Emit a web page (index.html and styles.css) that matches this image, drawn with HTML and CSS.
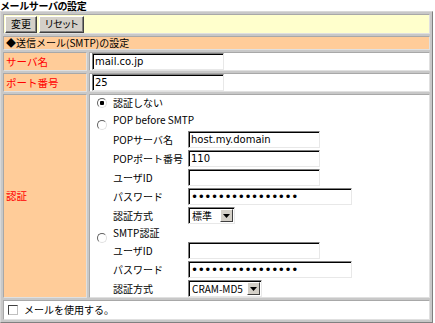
FILE: index.html
```html
<!DOCTYPE html>
<html lang="ja">

<head>
    <meta charset="UTF-8">
    <title>メールサーバの設定</title>
    <link rel="stylesheet" href="styles.css">
</head>

<body>
    <h1 class="page-title">メールサーバの設定</h1>
    <form id="mail-form">
        <table class="settings">
            <tr class="toolbar">
                <td colspan="2">
                    <button type="submit" class="btn">変更</button><button type="reset" class="btn">リセット</button>
                </td>
            </tr>
            <tr class="section">
                <td colspan="2">◆送信メール(SMTP)の設定</td>
            </tr>
            <tr>
                <th>サーバ名</th>
                <td><input type="text" class="field" value="mail.co.jp"></td>
            </tr>
            <tr>
                <th>ポート番号</th>
                <td><input type="text" class="field" value="25"></td>
            </tr>
            <tr>
                <th class="auth-label">認証</th>
                <td class="auth-cell">
                    <label class="option first">
                        <input type="radio" name="auth" class="radio" checked>
                        <span>認証しない</span>
                    </label>

                    <label class="option drop">
                        <input type="radio" name="auth" class="radio">
                        <span>POP before SMTP</span>
                    </label>
                    <div class="sub-fields pop">
                        <span class="sub-label">POPサーバ名</span>
                        <input type="text" class="field" value="host.my.domain">
                        <span class="sub-label">POPポート番号</span>
                        <input type="text" class="field" value="110">
                        <span class="sub-label">ユーザID</span>
                        <input type="text" class="field" value="">
                        <span class="sub-label">パスワード</span>
                        <input type="password" class="field wide" value="1234567890123456">
                        <span class="sub-label">認証方式</span>
                        <div class="select-box">
                            <select class="select short">
                                <option>標準</option>
                                <option>APOP</option>
                            </select><span class="select-arrow"><svg width="7" height="4" viewBox="0 0 7 4"><path d="M0 0h7L3.5 4z" fill="#000"/></svg></span>
                        </div>
                    </div>

                    <label class="option drop">
                        <input type="radio" name="auth" class="radio">
                        <span>SMTP認証</span>
                    </label>
                    <div class="sub-fields">
                        <span class="sub-label">ユーザID</span>
                        <input type="text" class="field" value="">
                        <span class="sub-label">パスワード</span>
                        <input type="password" class="field wide" value="1234567890123456">
                        <span class="sub-label">認証方式</span>
                        <div class="select-box">
                            <select class="select long">
                                <option>CRAM-MD5</option>
                                <option>LOGIN</option>
                                <option>PLAIN</option>
                            </select><span class="select-arrow"><svg width="7" height="4" viewBox="0 0 7 4"><path d="M0 0h7L3.5 4z" fill="#000"/></svg></span>
                        </div>
                    </div>
                </td>
            </tr>
            <tr class="footer">
                <td colspan="2">
                    <label class="option"><input type="checkbox" class="check"><span>メールを使用する。</span></label>
                </td>
            </tr>
        </table>
    </form>
</body>

</html>
```

FILE: styles.css
```css
body {
    margin: 0;
    background-color: white;
    font-family: "Noto Sans CJK JP", "DejaVu Sans", sans-serif;
    font-size: 10px;
    line-height: 12px;
    color: black;
}

.page-title {
    margin: 0;
    font-size: 10px;
    line-height: 11px;
    font-weight: bold;
    letter-spacing: -0.4px;
}

.settings {
    width: 433px;
    border-collapse: separate;
    border-spacing: 2px;
    border: 1px solid;
    border-color: #d8d8d8 #808080 #808080 #d8d8d8;
    background-color: #c8c8c8;
}

.settings td,
.settings th {
    border: 1px solid;
    border-color: #a8a8a8 #e0e0e0 #e0e0e0 #a8a8a8;
    padding: 0 2px;
    background-color: white;
    text-align: left;
    vertical-align: middle;
    font-weight: normal;
}

.settings th {
    width: 78px;
    background-color: #ffcc99;
    color: #ff0000;
    font-size: 10.5px;
}

.toolbar td {
    background-color: #ffffcc;
    padding: 0 1px;
    height: 18px;
}

.section td {
    background-color: #ffcc99;
    height: 12px;
}

.btn {
    font-family: "Noto Sans CJK JP", sans-serif;
    font-size: 10px;
    font-feature-settings: "palt";
    line-height: 12px;
    height: 17px;
    padding: 0 5px;
    margin: 0 2px 0 0;
    vertical-align: middle;
    background-color: #d4d0c8;
    border: 1px solid;
    border-color: white #404040 #404040 white;
    box-shadow: inset -1px -1px 0 #808080;
}

.field {
    width: 132px;
    height: 17px;
    box-sizing: border-box;
    padding: 0 2px;
    font-family: "DejaVu Sans", sans-serif;
    font-size: 10px;
    border: 1px solid;
    border-color: #808080 #e8e8e8 #e8e8e8 #808080;
    box-shadow: inset 1px 1px 0 #000;
    margin: 0;
    vertical-align: middle;
}

.field.wide {
    width: 164px;
    font-size: 12px;
    letter-spacing: -0.4px;
}

.auth-cell {
    padding: 0 2px;
}

.option {
    display: flex;
    align-items: center;
    gap: 6px;
    height: 18px;
    padding-left: 5px;
}

.option.first {
    height: 16px;
}

.option.drop .radio {
    margin-top: 9px;
}

.radio {
    appearance: none;
    flex: none;
    width: 10px;
    height: 10px;
    margin: 0;
    border-radius: 50%;
    border: 1px solid;
    border-color: #606060 #e0e0e0 #e0e0e0 #606060;
    background-color: white;
}

.radio:checked {
    background: radial-gradient(circle, black 0 2px, white 2.5px);
}

.check {
    appearance: none;
    flex: none;
    width: 10px;
    height: 10px;
    margin: 0;
    border: 1px solid;
    border-color: #404040 #c0c0c0 #c0c0c0 #404040;
    background-color: white;
}

.sub-fields {
    display: grid;
    grid-template-columns: 75px auto;
    row-gap: 2px;
    align-items: center;
    justify-items: start;
    margin-left: 21px;
}

.sub-fields.pop {
    margin-top: 2px;
}

.select-box {
    display: inline-flex;
    height: 17px;
    border: 1px solid;
    border-color: #808080 #e8e8e8 #e8e8e8 #808080;
    box-shadow: inset 1px 1px 0 #000;
    background-color: white;
    box-sizing: border-box;
    padding: 1px;
}

.select {
    appearance: none;
    border: none;
    background: transparent;
    font-family: "Noto Sans CJK JP", sans-serif;
    font-size: 10px;
    padding: 0 2px;
    height: 13px;
    line-height: 13px;
}

.select.short {
    width: 30px;
}

.select.long {
    width: 57px;
}

.select-arrow {
    display: flex;
    align-items: center;
    justify-content: center;
    width: 13px;
    height: 13px;
    box-sizing: border-box;
    background-color: #d4d0c8;
    border: 1px solid;
    border-color: white #404040 #404040 white;
}

.footer td {
    padding: 2px 2px;
}

.footer .option {
    height: 14px;
    padding-left: 2px;
}
```
